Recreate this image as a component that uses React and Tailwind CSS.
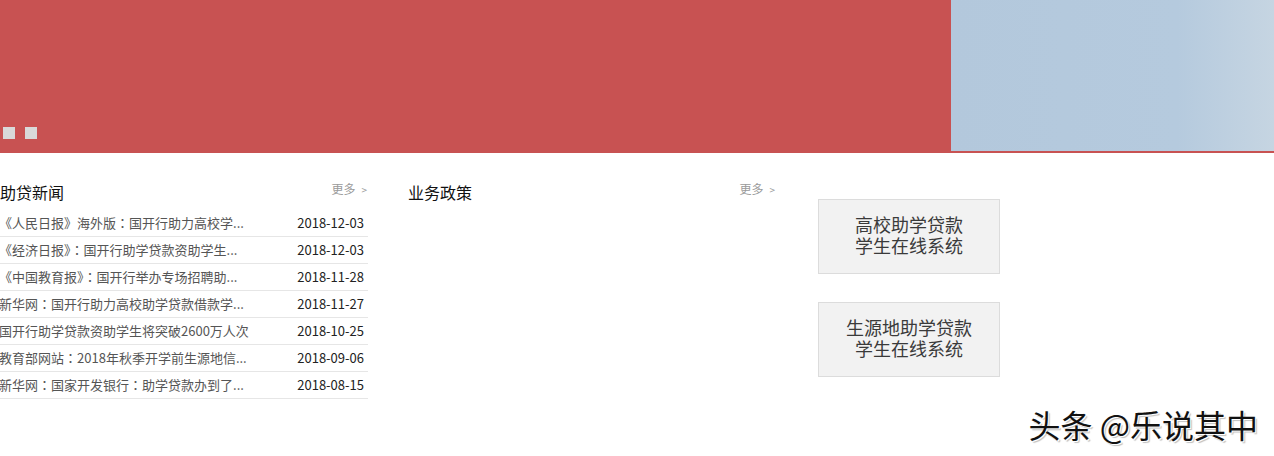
// App.jsx — 助学贷款 home section: banner, news list, policy column and system links

const font = { fontFamily: "'Noto Sans CJK SC', 'Microsoft YaHei', sans-serif" };

const news = [
  { title: "《人民日报》海外版：国开行助力高校学...", date: "2018-12-03" },
  { title: "《经济日报》：国开行助学贷款资助学生...", date: "2018-12-03" },
  { title: "《中国教育报》：国开行举办专场招聘助...", date: "2018-11-28" },
  { title: "新华网：国开行助力高校助学贷款借款学...", date: "2018-11-27" },
  { title: "国开行助学贷款资助学生将突破2600万人次", date: "2018-10-25" },
  { title: "教育部网站：2018年秋季开学前生源地信...", date: "2018-09-06" },
  { title: "新华网：国家开发银行：助学贷款办到了...", date: "2018-08-15" },
];

// full-width colons sit centred in the original font, so draw them with TC
function Title({ text }) {
  const parts = text.split("：");
  return parts.map((p, i) => (
    <span key={i}>
      {p}
      {i < parts.length - 1 && (
        <span style={{ fontFamily: "'Noto Sans CJK TC', sans-serif" }}>：</span>
      )}
    </span>
  ));
}

function SectionHeader({ title }) {
  return (
    <div className="flex justify-between items-start h-[30px]">
      <h2 className="text-[16px] leading-[24px] text-[#111]">{title}</h2>
      <a className="text-[12px] leading-[18px] text-[#9a9a9a] pr-[1px]">
        更多<span className="text-[10px] ml-[6px]">&gt;</span>
      </a>
    </div>
  );
}

function SystemButton({ top, bottom }) {
  return (
    <div className="w-[182px] h-[75px] pb-[3px] bg-[#f2f2f2] border border-[#dcdcdc] flex items-center justify-center">
      <p className="text-center text-[18px] leading-[21px] text-[#3a3a3a]">
        {top}
        <br />
        {bottom}
      </p>
    </div>
  );
}

export default function App() {
  return (
    <div className="relative w-[1274px] h-[456px] bg-white overflow-hidden" style={font}>
      {/* banner */}
      <div className="flex h-[153px] bg-[#c85252]">
        <div className="flex-1 flex items-end gap-[10px] pl-[3px] pb-[14px]">
          <span className="w-[12px] h-[12px] bg-[#d9d9d9]" />
          <span className="w-[12px] h-[12px] bg-[#d9d9d9]" />
        </div>
        <div className="w-[323px] h-[151px] bg-gradient-to-r from-[#b3c8dc] via-[#b5cade] via-70% to-[#c6d5e2]" />
      </div>

      <div className="flex pt-[27px]">
        {/* news */}
        <div className="w-[368px]">
          <SectionHeader title="助贷新闻" />
          <ul>
            {news.map((n) => (
              <li
                key={n.title}
                className="flex justify-between items-center h-[27px] border-b border-[#e6e6e6] text-[13px]"
              >
                <span className="text-[#555] -ml-[1px] whitespace-nowrap">
                  <Title text={n.title} />
                </span>
                <span className="text-[#222] pr-[4px]">{n.date}</span>
              </li>
            ))}
          </ul>
        </div>

        {/* policy */}
        <div className="w-[368px] ml-[40px]">
          <SectionHeader title="业务政策" />
        </div>

        {/* systems */}
        <div className="ml-[42px] pt-[19px] flex flex-col gap-[28px]">
          <SystemButton top="高校助学贷款" bottom="学生在线系统" />
          <SystemButton top="生源地助学贷款" bottom="学生在线系统" />
        </div>
      </div>

      {/* watermark */}
      <div className="absolute right-[16px] top-[402px] text-[32px] leading-[44px] text-[#111] whitespace-nowrap [text-shadow:1px_1px_0_#fff,2px_2px_1px_rgba(0,0,0,0.25)]">
        头条 @乐说其中
      </div>
    </div>
  );
}
